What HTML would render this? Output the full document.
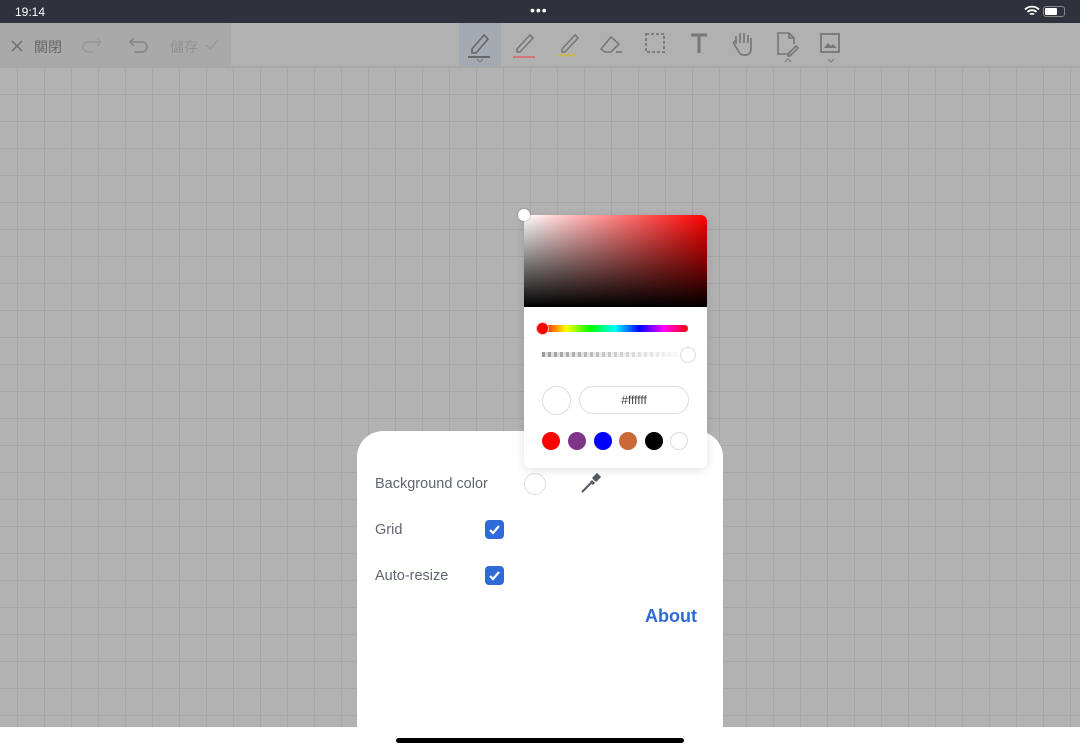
<!DOCTYPE html>
<html><head><meta charset="utf-8"><style>
*{margin:0;padding:0;box-sizing:border-box}
body{width:1080px;height:750px;overflow:hidden;position:relative;font-family:"Liberation Sans","Noto Sans CJK TC",sans-serif;background:#fff}
.grid{position:absolute;left:0;top:67px;width:1080px;height:660px;background-color:#b3b2b3;
background-image:linear-gradient(to right,#a7a6a7 1px,transparent 1px),linear-gradient(to bottom,#a7a6a7 1px,transparent 1px);
background-size:27px 27px;background-position:17px 0px}
.status{position:absolute;left:0;top:0;width:1080px;height:23px;background:#2f323d;color:#fff;font-size:12px}
.tb{position:absolute;left:0;top:23px;width:1080px;height:44px;background:#b2b1b2;border-bottom:1px solid #a8a8a8}
.tbl{position:absolute;left:0;top:0;width:231px;height:44px;background:#aaa9aa}
.sel{position:absolute;left:459px;top:0;width:42px;height:44px;background:#a5a9b1}
svg{position:absolute}
.panel{position:absolute;left:357px;top:431px;width:366px;height:310px;background:#fff;border-radius:26px 26px 0 0}
.lbl{position:absolute;color:#5f6570;font-size:14.5px}
.cb{position:absolute;width:19px;height:19px;border-radius:4px;background:#2f6ad9}
.pop{position:absolute;left:524px;top:215px;width:183px;height:253px;background:#fff;border-radius:6px;box-shadow:0 2px 10px rgba(0,0,0,.12);overflow:hidden}
.sv{position:absolute;left:0;top:0;width:183px;height:92px;background:linear-gradient(to bottom,rgba(0,0,0,0),#000),linear-gradient(to right,#fff,#f00)}
.dot{position:absolute;width:18px;height:18px;border-radius:50%;top:217px}
.bottom{position:absolute;left:0;top:727px;width:1080px;height:23px;background:#fff}
</style></head><body>
<div class="grid"></div>
<div class="status"><span style="position:absolute;left:15px;top:5px">19:14</span>
<span style="position:absolute;left:530px;top:2px;font-size:14px;letter-spacing:1px">•••</span>
<svg style="left:1024px;top:5px" width="16" height="12" viewBox="0 0 16 12"><path d="M1 4.5a10 10 0 0 1 14 0M3.5 7a6.5 6.5 0 0 1 9 0M6 9.5a3 3 0 0 1 4 0" stroke="#fff" stroke-width="1.8" fill="none"/></svg>
<div style="position:absolute;left:1043px;top:6px;width:22px;height:11px;border:1px solid #888;border-radius:3px"><div style="margin:1px;width:12px;height:7px;background:#fff;border-radius:1px"></div></div>
</div>
<div class="tb"><div class="tbl"></div><div class="sel"></div>
<svg style="left:10px;top:16px" width="14" height="14"><path d="M2 2L12 12M12 2L2 12" stroke="#6e6e6e" stroke-width="1.5"/></svg>
<span style="position:absolute;left:34px;top:14px;font-size:14px;color:#666">關閉</span>
<svg style="left:80px;top:12px" width="26" height="22"><path d="M21 7H8a5 5 0 0 0 0 10h6M17 3l4 4-4 4" stroke="#999" stroke-width="1.8" fill="none"/></svg>
<svg style="left:125px;top:12px" width="26" height="22"><path d="M5 7h12a5 5 0 0 1 0 10H9M9 3L5 7l4 4" stroke="#888" stroke-width="1.8" fill="none"/></svg>
<span style="position:absolute;left:170px;top:14px;font-size:14px;color:#929292">儲存</span>
<svg style="left:204px;top:15px" width="16" height="14"><path d="M2 7l4 4 8-9" stroke="#999" stroke-width="1.5" fill="none"/></svg>
<svg style="left:466px;top:6px" width="28" height="34"><path d="M6 20l12-14 4 4-12 14H6z" stroke="#666" stroke-width="1.6" fill="none"/><path d="M2 28h22" stroke="#666" stroke-width="2"/></svg>
<svg style="left:476px;top:35px" width="8" height="5"><path d="M1 1l3 3 3-3" stroke="#777" fill="none"/></svg>
<svg style="left:510px;top:6px" width="28" height="30"><path d="M7 20L20 6l3 3-13 14H7z" stroke="#777" stroke-width="1.6" fill="none"/><path d="M3 28h22" stroke="#d66" stroke-width="1.6"/></svg>
<svg style="left:555px;top:6px" width="28" height="30"><path d="M7 20L20 6l3 3-13 14H7z" stroke="#777" stroke-width="1.6" fill="none"/><path d="M3 27l2-2 2 2 2-2 2 2 2-2 2 2 2-2 2 2 2-2" stroke="#c8b84a" stroke-width="1.4" fill="none"/></svg>
<svg style="left:598px;top:8px" width="28" height="26"><path d="M3 18l10-12 8 7-8 8H7z" stroke="#777" stroke-width="1.6" fill="none"/><path d="M18 21h6" stroke="#777" stroke-width="1.6"/></svg>
<svg style="left:644px;top:9px" width="24" height="24"><rect x="2" y="2" width="18" height="18" stroke="#777" stroke-width="1.8" stroke-dasharray="3 2" fill="none"/></svg>
<svg style="left:688px;top:9px" width="24" height="24"><path d="M3 3h16M11 3v18" stroke="#777" stroke-width="3"/></svg>
<svg style="left:730px;top:7px" width="26" height="28"><path d="M6 14V6M10 13V3M14 13V3M18 13V5M6 14v-3c-2 0-3 1-2 3l5 8c1 2 2 3 5 3h2c3 0 5-3 5-6V8" stroke="#777" stroke-width="1.7" fill="none"/></svg>
<svg style="left:774px;top:7px" width="28" height="28"><path d="M16 24H4V3h11l5 5v6M15 3v5h5M14 24l8-8 2 2-8 8h-2z" stroke="#777" stroke-width="1.6" fill="none"/></svg>
<svg style="left:784px;top:35px" width="8" height="5"><path d="M1 4l3-3 3 3" stroke="#777" fill="none"/></svg>
<svg style="left:818px;top:8px" width="26" height="26"><rect x="3" y="3" width="18" height="18" stroke="#777" stroke-width="1.8" fill="none"/><path d="M6 17l4-5 3 3 2-2 4 4z" fill="#777"/></svg>
<svg style="left:827px;top:35px" width="8" height="5"><path d="M1 1l3 3 3-3" stroke="#777" fill="none"/></svg>
</div>
<div class="panel">
<div class="lbl" style="left:18px;top:45px">Background color</div>
<div style="position:absolute;left:167px;top:42px;width:22px;height:22px;border:1px solid #ddd;border-radius:50%"></div>
<svg style="left:222px;top:42px" width="22" height="22"><path d="M3 19l10-10" stroke="#555b64" stroke-width="2" fill="none"/><path d="M12 8l3 3" stroke="#555b64" stroke-width="3"/><path d="M14 6l4-4 2 2-4 4" stroke="#555b64" stroke-width="3"/></svg>
<div class="lbl" style="left:18px;top:91px">Grid</div>
<div class="cb" style="left:128px;top:89px"></div>
<svg style="left:128px;top:89px" width="19" height="19"><path d="M5 10l3 3 6-7" stroke="#fff" stroke-width="2.2" fill="none"/></svg>
<div class="lbl" style="left:18px;top:137px">Auto-resize</div>
<div class="cb" style="left:128px;top:135px"></div>
<svg style="left:128px;top:135px" width="19" height="19"><path d="M5 10l3 3 6-7" stroke="#fff" stroke-width="2.2" fill="none"/></svg>
<div style="position:absolute;left:288px;top:175px;font-size:18px;font-weight:bold;color:#2f6ad9">About</div>
</div>
<div class="pop"><div class="sv"></div>
<div style="position:absolute;left:18px;top:110px;width:146px;height:7px;border-radius:4px;background:linear-gradient(to right,#f00,#ff0,#0f0,#0ff,#00f,#f0f,#f00)"></div>
<div style="position:absolute;left:12px;top:107px;width:13px;height:13px;border-radius:50%;background:#f00;border:1px solid #fbb"></div>
<div style="position:absolute;left:18px;top:137px;width:146px;height:5px;background:repeating-linear-gradient(to right,#999 0 3px,#ddd 3px 6px);-webkit-mask:linear-gradient(to right,#000,transparent)"></div>
<div style="position:absolute;left:156px;top:132px;width:16px;height:16px;border-radius:50%;background:#fff;border:1px solid #ddd"></div>
<div style="position:absolute;left:18px;top:171px;width:29px;height:29px;border-radius:50%;border:1px solid #ddd"></div>
<div style="position:absolute;left:55px;top:171px;width:110px;height:28px;border-radius:14px;border:1px solid #ddd;font-size:12px;color:#444;text-align:center;line-height:26px">#ffffff</div>
<div class="dot" style="left:18px;background:#f00"></div>
<div class="dot" style="left:44px;background:#7f3587"></div>
<div class="dot" style="left:70px;background:#00f"></div>
<div class="dot" style="left:95px;background:#c9693a"></div>
<div class="dot" style="left:121px;background:#000"></div>
<div class="dot" style="left:146px;border:1px solid #ddd"></div>
</div>
<div style="position:absolute;left:518px;top:209px;width:12px;height:12px;border-radius:50%;background:#fff;box-shadow:0 0 2px rgba(0,0,0,.3)"></div>
<div class="bottom"></div>
<div style="position:absolute;left:396px;top:738px;width:288px;height:5px;border-radius:3px;background:#000"></div>
</body></html>
